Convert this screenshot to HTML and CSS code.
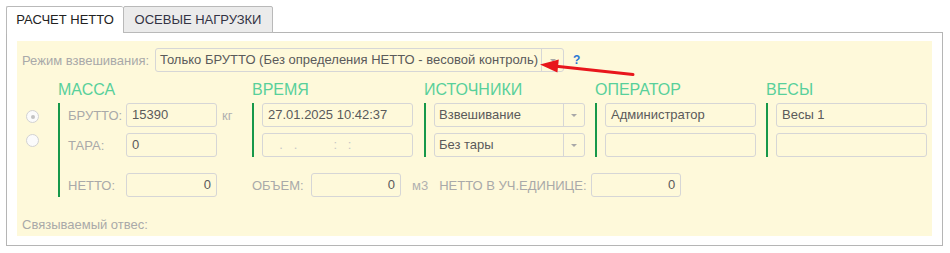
FILE: index.html
```html
<!DOCTYPE html>
<html lang="ru">
<head>
    <meta charset="UTF-8">
    <title>Расчет нетто</title>
    <link rel="stylesheet" href="styles.css">
</head>
<body>
    <div class="page">
        <div class="tabs">
            <div class="tab tab-active">РАСЧЕТ НЕТТО</div>
            <div class="tab">ОСЕВЫЕ НАГРУЗКИ</div>
        </div>
        <div class="panel">
            <div class="form">
                <div class="mode-row">
                    <span class="mode-label">Режим взвешивания:</span>
                    <div class="select mode-select">
                        <span class="select-text">Только БРУТТО (Без определения НЕТТО - весовой контроль)</span>
                        <span class="select-btn"><span class="caret"></span></span>
                    </div>
                    <span class="help">?</span>
                </div>

                <div class="main">
                    <div class="radios">
                        <span class="radio radio-checked"></span>
                        <span class="radio"></span>
                    </div>

                    <div class="group group-mass">
                        <div class="group-title">МАССА</div>
                        <div class="group-fields">
                            <div class="row">
                                <span class="lbl">БРУТТО:</span>
                                <div class="field field-short">15390</div>
                                <span class="unit">кг</span>
                            </div>
                            <div class="row">
                                <span class="lbl">ТАРА:</span>
                                <div class="field field-short">0</div>
                            </div>
                            <div class="row row-netto">
                                <span class="lbl">НЕТТО:</span>
                                <div class="field field-short num">0</div>
                            </div>
                        </div>
                    </div>

                    <div class="right">
                        <div class="groups">
                            <div class="group group-time">
                                <div class="group-title">ВРЕМЯ</div>
                                <div class="group-fields">
                                    <div class="field field-wide">27.01.2025 10:42:37</div>
                                    <div class="field field-wide placeholder">  .   .          :   :</div>
                                </div>
                            </div>
                            <div class="group group-src">
                                <div class="group-title">ИСТОЧНИКИ</div>
                                <div class="group-fields">
                                    <div class="select field-wide">
                                        <span class="select-text">Взвешивание</span>
                                        <span class="select-btn"><span class="caret"></span></span>
                                    </div>
                                    <div class="select field-wide">
                                        <span class="select-text">Без тары</span>
                                        <span class="select-btn"><span class="caret"></span></span>
                                    </div>
                                </div>
                            </div>
                            <div class="group group-op">
                                <div class="group-title">ОПЕРАТОР</div>
                                <div class="group-fields">
                                    <div class="field field-wide">Администратор</div>
                                    <div class="field field-wide"></div>
                                </div>
                            </div>
                            <div class="group group-scales">
                                <div class="group-title">ВЕСЫ</div>
                                <div class="group-fields">
                                    <div class="field field-wide">Весы 1</div>
                                    <div class="field field-wide"></div>
                                </div>
                            </div>
                        </div>

                        <div class="bottom-row">
                            <span class="lbl lbl-volume">ОБЪЕМ:</span>
                            <div class="field field-num num">0</div>
                            <span class="unit unit-m3">м3</span>
                            <span class="lbl lbl-unit">НЕТТО В УЧ.ЕДИНИЦЕ:</span>
                            <div class="field field-num num">0</div>
                        </div>
                    </div>
                </div>

                <div class="linked">Связываемый отвес:</div>
            </div>
        </div>
    </div>

    <svg class="arrow" width="950" height="253" viewBox="0 0 950 253">
        <line x1="633" y1="74.5" x2="554" y2="66" stroke="#e8161c" stroke-width="3" stroke-linecap="round"/>
        <polygon points="540,64.5 558.8,59.5 557.4,72.6" fill="#e8161c"/>
    </svg>
</body>
</html>
```

FILE: styles.css
```css
body {
    margin: 0;
    background-color: #fff;
    font-family: 'Liberation Sans', Arial, sans-serif;
    font-size: 13px;
    color: #4a4a4a;
}
.page {
    padding: 6px 7px 0 6px;
}
.tabs {
    display: flex;
    height: 27px;
    margin-bottom: -1px;
    position: relative;
    z-index: 1;
}
.tab {
    box-sizing: border-box;
    height: 27px;
    width: 150px;
    line-height: 26px;
    text-align: center;
    color: #333344;
    background-color: #ebebeb;
    border: 1px solid #b9b9b9;
    border-radius: 2px 2px 0 0;
}
.tab-active {
    width: 117px;
    height: 28px;
    background-color: #fff;
    border-bottom: none;
    border-right: none;
    color: #222;
}
.panel {
    border: 1px solid #b5b5b5;
    padding: 8px 10px 9px 10px;
}
.form {
    background-color: #fef9da;
    padding: 7px 5px 5px 5px;
    height: 183px;
}
.mode-row {
    display: flex;
    align-items: center;
    height: 24px;
}
.mode-label {
    width: 133px;
    color: #a9a9a9;
}
.select {
    display: flex;
    box-sizing: border-box;
    height: 24px;
    border: 1px solid #d6d6d6;
    border-radius: 3px;
}
.mode-select {
    width: 409px;
}
.select-text {
    flex: 1;
    line-height: 22px;
    padding-left: 4px;
    color: #5a5a5a;
    white-space: nowrap;
    overflow: hidden;
}
.select-btn {
    width: 20px;
    border-left: 1px solid #d6d6d6;
    display: flex;
    align-items: center;
    justify-content: center;
}
.mode-select .select-btn {
    width: 21px;
}
.caret {
    width: 0;
    height: 0;
    border-left: 3px solid transparent;
    border-right: 3px solid transparent;
    border-top: 3px solid #a8a8a8;
}
.help {
    margin-left: 9px;
    color: #2a78d4;
    font-weight: bold;
    font-size: 12px;
}
.main {
    display: flex;
    margin-top: 9px;
}
.radios {
    width: 36px;
    display: flex;
    flex-direction: column;
    gap: 11px;
    padding-top: 29px;
}
.radio {
    box-sizing: border-box;
    width: 13px;
    height: 13px;
    margin-left: 4px;
    border: 1px solid #d2d2d2;
    border-radius: 50%;
    background-color: #fbfbfb;
    display: flex;
    align-items: center;
    justify-content: center;
}
.radio-checked::after {
    content: '';
    width: 4px;
    height: 4px;
    border-radius: 50%;
    background-color: #c2c2c2;
}
.groups {
    display: flex;
}
.group-title {
    height: 18px;
    line-height: 18px;
    font-size: 16px;
    color: #58d09a;
    margin-bottom: 4px;
}
.group-fields {
    border-left: 2px solid #17984a;
    padding-left: 8px;
    display: flex;
    flex-direction: column;
    gap: 6px;
}
.group-mass {
    width: 194px;
}
.group-time {
    width: 172px;
}
.group-src,
.group-op {
    width: 171px;
}
.row {
    display: flex;
    align-items: center;
}
.row-netto {
    margin-top: 10px;
}
.lbl {
    color: #a9a9a9;
}
.group-mass .lbl {
    width: 58px;
}
.field {
    box-sizing: border-box;
    height: 24px;
    line-height: 22px;
    padding: 0 5px;
    border: 1px solid #d6d6d6;
    border-radius: 3px;
    color: #5a5a5a;
    white-space: nowrap;
}
.field-short {
    width: 91px;
}
.field-wide {
    width: 151px;
}
.field-num {
    width: 90px;
}
.num {
    text-align: right;
}
.placeholder {
    white-space: pre;
    color: #c6c6c6;
    padding-left: 9px;
}
.unit {
    margin-left: 5px;
    color: #b0b0b0;
}
.bottom-row {
    display: flex;
    align-items: center;
    margin-top: 16px;
}
.lbl-volume {
    width: 59px;
}
.unit-m3 {
    margin-left: 11px;
    margin-right: 11px;
}
.lbl-unit {
    width: 152px;
}
.linked {
    margin-top: 20px;
    line-height: 16px;
    color: #a9a9a9;
}
.arrow {
    position: absolute;
    left: 0;
    top: 0;
    pointer-events: none;
}
```
